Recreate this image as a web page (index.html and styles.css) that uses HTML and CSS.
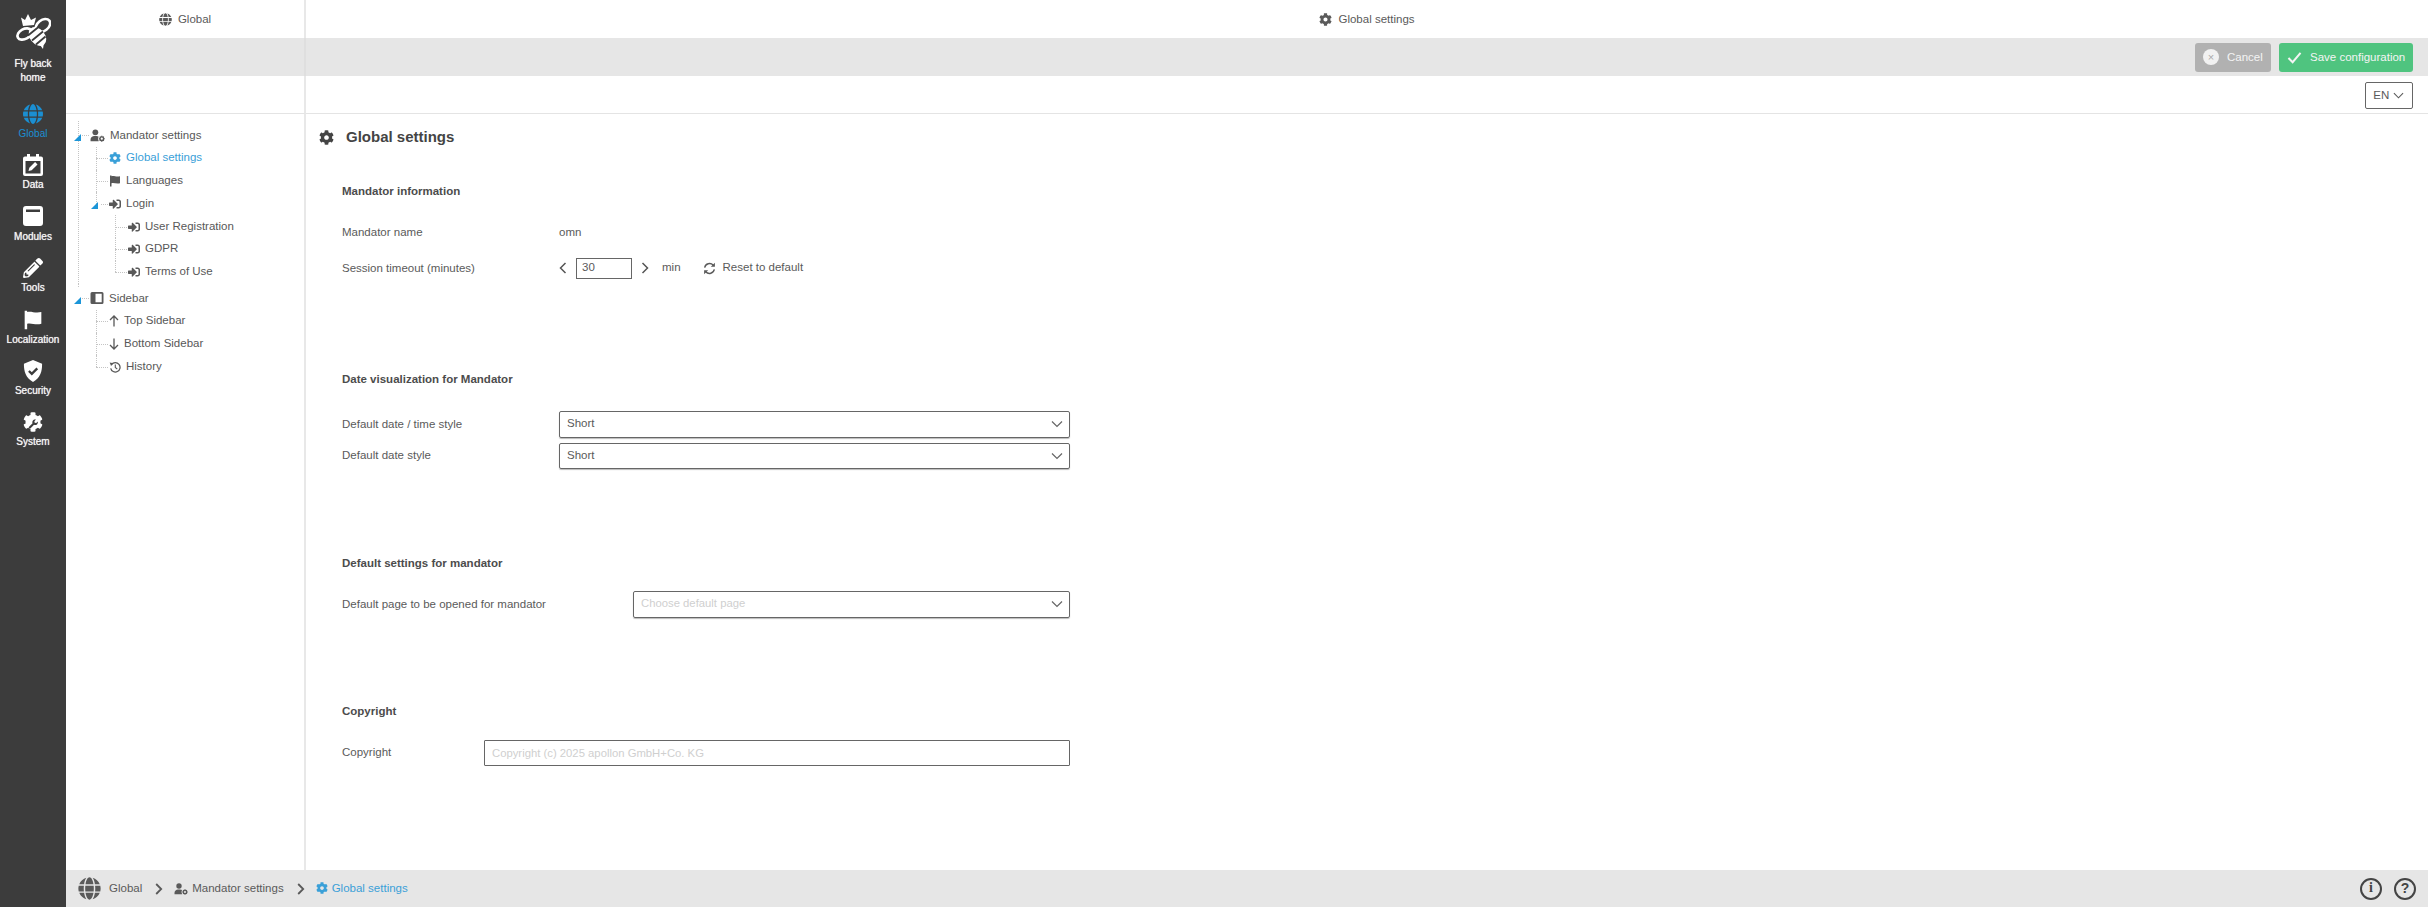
FILE: index.html
```html
<!DOCTYPE html>
<html lang="en">
<head>
<meta charset="utf-8">
<title>Global settings</title>
<link rel="stylesheet" href="styles.css">
</head>
<body>
<svg class="defs" aria-hidden="true">
  <symbol id="i-globe" viewBox="0 0 496 512"><path d="M336.5 160C322 70.7 287.8 8 248 8s-74 62.7-88.5 152h177zM152 256c0 22.2 1.2 43.5 3.3 64h185.3c2.1-20.5 3.3-41.8 3.3-64s-1.2-43.5-3.3-64H155.3c-2.1 20.5-3.3 41.8-3.3 64zm324.7-96c-28.6-67.9-86.5-120.4-158-141.6 24.4 33.8 41.2 84.7 50 141.6h108zM177.2 18.4C105.8 39.6 47.8 92.1 19.3 160h108c8.7-56.9 25.5-107.8 49.9-141.6zM487.4 192H372.7c2.1 21 3.3 42.5 3.3 64s-1.2 43-3.3 64h114.6c5.5-20.5 8.6-41.8 8.6-64s-3.1-43.5-8.5-64zM120 256c0-21.5 1.2-43 3.3-64H8.6C3.2 212.5 0 233.8 0 256s3.2 43.5 8.6 64h114.6c-2-21-3.2-42.5-3.2-64zm39.5 96c14.5 89.3 48.7 152 88.5 152s74-62.7 88.5-152h-177zm159.3 141.6c71.4-21.2 129.4-73.7 158-141.6h-108c-8.8 56.9-25.6 107.8-50 141.6zM19.3 352c28.6 67.9 86.5 120.4 158 141.6-24.4-33.8-41.2-84.7-50-141.6h-108z"/></symbol>
  <symbol id="i-cog" viewBox="0 0 512 512"><path d="M487.4 315.7l-42.6-24.6c4.3-23.2 4.3-47 0-70.2l42.6-24.6c4.9-2.8 7.1-8.6 5.5-14-11.1-35.6-30-67.8-54.7-94.6-3.8-4.1-10-5.1-14.8-2.3L380.8 110c-17.9-15.4-38.5-27.3-60.8-35.1V25.8c0-5.6-3.9-10.5-9.4-11.7-36.7-8.2-74.3-7.8-109.2 0-5.5 1.2-9.4 6.1-9.4 11.7V75c-22.2 7.9-42.8 19.8-60.8 35.1L88.7 85.5c-4.9-2.8-11-1.9-14.8 2.3-24.7 26.7-43.6 58.9-54.7 94.6-1.7 5.4.6 11.2 5.5 14L67.3 221c-4.3 23.2-4.3 47 0 70.2l-42.6 24.6c-4.9 2.8-7.1 8.6-5.5 14 11.1 35.6 30 67.8 54.7 94.6 3.8 4.1 10 5.1 14.8 2.3l42.6-24.6c17.9 15.4 38.5 27.3 60.8 35.1v49.2c0 5.6 3.9 10.5 9.4 11.7 36.7 8.2 74.3 7.8 109.2 0 5.5-1.2 9.4-6.1 9.4-11.7v-49.2c22.2-7.9 42.8-19.8 60.8-35.1l42.6 24.6c4.9 2.8 11 1.9 14.8-2.3 24.7-26.7 43.6-58.9 54.7-94.6 1.5-5.5-.7-11.3-5.6-14.1zM256 336c-44.1 0-80-35.9-80-80s35.9-80 80-80 80 35.9 80 80-35.9 80-80 80z"/></symbol>
  <symbol id="i-signin" viewBox="0 0 512 512"><path d="M416 448h-84c-6.6 0-12-5.4-12-12v-40c0-6.6 5.4-12 12-12h84c17.7 0 32-14.3 32-32V160c0-17.7-14.3-32-32-32h-84c-6.6 0-12-5.4-12-12V76c0-6.6 5.4-12 12-12h84c53 0 96 43 96 96v192c0 53-43 96-96 96zm-47-201L201 79c-15-15-41-4.5-41 17v96H24c-13.3 0-24 10.7-24 24v96c0 13.3 10.7 24 24 24h136v96c0 21.5 26 32 41 17l168-168c9.3-9.4 9.3-24.6 0-34z"/></symbol>
  <symbol id="i-usercog" viewBox="0 0 28 24"><circle cx="10" cy="6" r="5.4"/><path d="M1 22.5v-3C1 15.5 4.5 13 8 13h4c1.6 0 3 .4 4.2 1.2-1.4 2.2-1.4 5.4 0 7.6.2.3 0 .7-.2.7H1z"/><circle cx="22" cy="18" r="3.4" fill="none" stroke="currentColor" stroke-width="2.6"/><path d="M22 12.4v2M22 21.6v2M16.6 18h2M25.4 18h2M18.2 14.2l1.4 1.4M24.4 20.4l1.4 1.4M18.2 21.8l1.4-1.4M24.4 15.6l1.4-1.4" stroke="currentColor" stroke-width="2.2"/></symbol>
  <symbol id="i-flag" viewBox="0 0 24 24"><path d="M2 1h3v1.500c5-1.500 9 1.800 17 0v14c-7 2-12-1.500-17 0V23H2z"/></symbol>
  <symbol id="i-chev" viewBox="0 0 12 12"><path d="M1 3.500l5 5 5-5" fill="none" stroke="currentColor" stroke-width="1.200"/></symbol>
</svg>

<div class="app">
  <nav class="rail">
    <a class="rail-home">
      <svg class="bee" viewBox="0 0 36 36">
        <path class="bee-fill" d="M6 3.500l4 2.500 3-6 3 6 5-2.500-2 7.500-11 1z"/>
        <ellipse class="bee-line" cx="28" cy="11.500" rx="8" ry="5.500" transform="rotate(-38 28 11.500)"/>
        <ellipse class="bee-line" cx="9.500" cy="20" rx="7.500" ry="5" transform="rotate(-28 9.500 20)"/>
        <ellipse class="bee-fill" cx="22.500" cy="22.500" rx="7.500" ry="10.500" transform="rotate(-38 22.500 22.500)"/>
        <path class="bee-fill" d="M25 31l3 4 1-7z"/>
        <path class="bee-stripe" d="M13 21.500L23.500 13M17 26.500L28 17.500M21 30.500L30.500 22.500"/>
      </svg>
      <span class="rail-label rail-home-label">Fly back<br>home</span>
    </a>
    <a class="rail-item active"><svg class="rail-icon"><use href="#i-globe"/></svg><span class="rail-label">Global</span></a>
    <a class="rail-item">
      <svg class="rail-icon" viewBox="0 0 20 22"><path d="M4 0h3v2.500h6V0h3v2.500h2a2 2 0 0 1 2 2V20a2 2 0 0 1-2 2H2a2 2 0 0 1-2-2V4.500a2 2 0 0 1 2-2h2zM2.500 7v12.500h15V7z"/><path d="M5.500 17l.8-3.200 5.800-5.800 2.400 2.400-5.800 5.800z"/></svg>
      <span class="rail-label">Data</span>
    </a>
    <a class="rail-item">
      <svg class="rail-icon rail-wide" viewBox="0 0 20 20"><path fill-rule="evenodd" d="M3 0h14a3 3 0 0 1 3 3v14a3 3 0 0 1-3 3H3a3 3 0 0 1-3-3V3a3 3 0 0 1 3-3zM3 3.500V6h14V3.500z"/></svg>
      <span class="rail-label">Modules</span>
    </a>
    <a class="rail-item">
      <svg class="rail-icon" viewBox="0 0 512 512"><path d="M497.9 142.1l-46.1 46.1c-4.7 4.7-12.3 4.7-17 0l-111-111c-4.7-4.7-4.7-12.3 0-17l46.1-46.1c18.7-18.7 49.1-18.7 67.9 0l60.1 60.1c18.8 18.7 18.8 49.1 0 67.9zM284.2 99.8L21.6 362.4.4 483.9c-2.9 16.4 11.4 30.600 27.8 27.8l121.5-21.3 262.6-262.6c4.7-4.7 4.7-12.3 0-17l-111-111c-4.8-4.7-12.4-4.7-17.1 0zM124.1 339.9c-5.5-5.5-5.5-14.3 0-19.8l154-154c5.5-5.5 14.3-5.5 19.8 0s5.5 14.3 0 19.8l-154 154c-5.5 5.5-14.3 5.5-19.8 0zM88 424h48v36.3l-64.5 11.3-31.1-31.1L51.7 376H88v48z"/></svg>
      <span class="rail-label">Tools</span>
    </a>
    <a class="rail-item"><svg class="rail-icon"><use href="#i-flag"/></svg><span class="rail-label">Localization</span></a>
    <a class="rail-item">
      <svg class="rail-icon" viewBox="0 0 22 24"><path d="M11 0l10 4c0 9-2 15.500-10 20C3 19.500 1 13 1 4z"/><path class="rail-cut" d="M6.500 12l3.200 3.200 6-6" stroke-width="2.600"/></svg>
      <span class="rail-label">Security</span>
    </a>
    <a class="rail-item">
      <svg class="rail-icon" viewBox="0 0 512 512"><use href="#i-cog"/><circle class="rail-hub" cx="256" cy="256" r="120"/><path class="rail-wrench" d="M150 385l95-95c-22-48 18-112 88-98l-42 44 8 38 38 8 44-42c10 70-52 108-98 88l-95 95c-24 12-50-14-38-38z"/></svg>
      <span class="rail-label">System</span>
    </a>
  </nav>

  <div class="main">
    <div class="cell side head"><svg class="ic13"><use href="#i-globe"/></svg><span>Global</span></div>
    <div class="cell head"><svg class="ic13"><use href="#i-cog"/></svg><span>Global settings</span></div>

    <div class="cell side band"></div>
    <div class="cell band actions">
      <button class="btn btn-cancel" type="button"><span class="x-dot">×</span>Cancel</button>
      <button class="btn btn-save" type="button"><svg class="check" viewBox="0 0 16 14"><path d="M1.500 7.500l4.500 4.500 8.500-10" fill="none" stroke="currentColor" stroke-width="2.200"/></svg>Save configuration</button>
    </div>

    <div class="cell side lang-row"></div>
    <div class="cell lang-row lang-end">
      <div class="lang">EN<svg class="chev-lang"><use href="#i-chev"/></svg></div>
    </div>

    <aside class="cell side tree-pane">
      <ul class="tree">
        <li class="open">
          <div class="row"><span class="tri"></span><svg class="ic-user"><use href="#i-usercog"/></svg><span class="t">Mandator settings</span></div>
          <ul>
            <li><div class="row current"><svg class="ic12"><use href="#i-cog"/></svg><span class="t">Global settings</span></div></li>
            <li><div class="row"><svg class="ic11"><use href="#i-flag"/></svg><span class="t">Languages</span></div></li>
            <li class="open">
              <div class="row"><span class="tri"></span><svg class="ic12"><use href="#i-signin"/></svg><span class="t">Login</span></div>
              <ul>
                <li><div class="row"><svg class="ic12"><use href="#i-signin"/></svg><span class="t">User Registration</span></div></li>
                <li><div class="row"><svg class="ic12"><use href="#i-signin"/></svg><span class="t">GDPR</span></div></li>
                <li><div class="row"><svg class="ic12"><use href="#i-signin"/></svg><span class="t">Terms of Use</span></div></li>
              </ul>
            </li>
          </ul>
        </li>
        <li class="open tree-sidebar">
          <div class="row"><span class="tri"></span><svg class="ic-panel" viewBox="0 0 14 14"><path fill-rule="evenodd" d="M2 1h10a1.500 1.500 0 0 1 1.500 1.500v9A1.500 1.500 0 0 1 12 13H2A1.500 1.500 0 0 1 .5 11.500v-9A1.500 1.500 0 0 1 2 1zm3.500 1.800V11.200h6.200V2.800z"/></svg><span class="t">Sidebar</span></div>
          <ul>
            <li><div class="row"><svg class="ic-arrow" viewBox="0 0 10 12"><path d="M5 11.500V1M1 5l4-4 4 4" fill="none" stroke="currentColor" stroke-width="1.300"/></svg><span class="t">Top Sidebar</span></div></li>
            <li><div class="row"><svg class="ic-arrow" viewBox="0 0 10 12"><path d="M5 .5V11M1 7l4 4 4-4" fill="none" stroke="currentColor" stroke-width="1.300"/></svg><span class="t">Bottom Sidebar</span></div></li>
            <li><div class="row"><svg class="ic12" viewBox="0 0 14 14"><path d="M3 4a5.500 5.500 0 1 1-1 4.500" fill="none" stroke="currentColor" stroke-width="1.500"/><path d="M.8 1.800l4.400.8-2.800 3.200zM6.700 4h1.300v3.300l2 1.500-.7 1-2.600-2z"/></svg><span class="t">History</span></div></li>
          </ul>
        </li>
      </ul>
    </aside>

    <section class="cell content">
      <h1 class="title"><svg class="ic-title"><use href="#i-cog"/></svg>Global settings</h1>

      <h2 class="sec sec-first">Mandator information</h2>
      <div class="field col-a field-plain"><span>Mandator name</span><span>omn</span></div>
      <div class="field col-a field-spaced">
        <span>Session timeout (minutes)</span>
        <div class="spinner">
          <svg class="spin-arrow" viewBox="0 0 8 12"><path d="M6.500 1L1.500 6l5 5" fill="none" stroke="currentColor" stroke-width="1.500"/></svg>
          <input class="num" type="text" value="30">
          <svg class="spin-arrow" viewBox="0 0 8 12"><path d="M1.500 1l5 5-5 5" fill="none" stroke="currentColor" stroke-width="1.500"/></svg>
          <span class="unit">min</span>
          <svg class="ic-reset" viewBox="0 0 14 14"><path d="M1.800 6A5.300 5.300 0 0 1 11 3.500M12.200 8A5.300 5.300 0 0 1 3 10.500" fill="none" stroke="currentColor" stroke-width="1.500"/><path d="M12.800.8v4.400H8.400zM1.200 13.200V8.800h4.400z"/></svg>
          <span>Reset to default</span>
        </div>
      </div>

      <h2 class="sec sec-date">Date visualization for Mandator</h2>
      <div class="field col-a field-ctl"><span>Default date / time style</span><div class="select"><span>Short</span><svg class="chev"><use href="#i-chev"/></svg></div></div>
      <div class="field col-a field-ctl field-gap"><span>Default date style</span><div class="select"><span>Short</span><svg class="chev"><use href="#i-chev"/></svg></div></div>

      <h2 class="sec sec-next">Default settings for mandator</h2>
      <div class="field col-b field-ctl"><span>Default page to be opened for mandator</span><div class="select"><span class="ph">Choose default page</span><svg class="chev"><use href="#i-chev"/></svg></div></div>

      <h2 class="sec sec-next">Copyright</h2>
      <div class="field col-c field-ctl"><span>Copyright</span><input class="text" type="text" placeholder="Copyright (c) 2025 apollon GmbH+Co. KG"></div>
    </section>

    <footer class="crumbs">
      <svg class="ic-crumb-globe"><use href="#i-globe"/></svg>
      <span>Global</span>
      <svg class="crumb-sep" viewBox="0 0 8 12"><path d="M1.200 1l5 5-5 5" fill="none" stroke="currentColor" stroke-width="1.800"/></svg>
      <svg class="ic-user"><use href="#i-usercog"/></svg>
      <span>Mandator settings</span>
      <svg class="crumb-sep" viewBox="0 0 8 12"><path d="M1.200 1l5 5-5 5" fill="none" stroke="currentColor" stroke-width="1.800"/></svg>
      <span class="crumb-current"><svg class="ic12"><use href="#i-cog"/></svg>Global settings</span>
      <span class="help"><span class="round round-i">i</span><span class="round">?</span></span>
    </footer>
  </div>
</div>
</body>
</html>
```
FILE: styles.css
```css
* { box-sizing: border-box; }
html, body { margin: 0; height: 100%; overflow: hidden; background: #fff; }
body { font: 11.5px/1.2 "Liberation Sans", Arial, sans-serif; color: #5a5a5a; }
.defs { position: absolute; width: 0; height: 0; }
svg { fill: currentColor; flex: none; display: block; }
ul { list-style: none; margin: 0; padding: 0; }

.app { display: flex; height: 907px; }

/* rail */
.rail { width: 66px; background: #3c3c3c; color: #fff; display: flex; flex-direction: column; align-items: center; padding-top: 14px; flex: none; }
.rail-home { display: flex; flex-direction: column; align-items: center; height: 89px; }
.bee { width: 36px; height: 36px; }
.bee-fill { fill: #fff; }
.bee-line { fill: none; stroke: #fff; stroke-width: 2.6; }
.bee-stripe { fill: none; stroke: #3c3c3c; stroke-width: 1.8; }
.rail-home-label { margin-top: 7px; line-height: 14px; text-align: center; }
.rail-label { font-size: 10px; line-height: 13px; color: #f2f2f2; text-shadow: 0 0 .7px #f2f2f2; white-space: nowrap; }
.rail-home .rail-home-label { line-height: 14px; }
.rail-item { display: flex; flex-direction: column; align-items: center; height: 51.4px; gap: 2px; }
.rail-icon { width: 20px; height: 22px; }
.rail-wide { width: 20px; height: 20px; margin-bottom: 2px; }
.rail-cut { stroke: #3c3c3c; fill: none; }
.rail-hub { fill: #fff; }
.rail-wrench { fill: #3c3c3c; }
.active, .active .rail-label { color: #1b8fd2; text-shadow: none; }

/* main grid */
.main { flex: 1; min-width: 0; display: grid; grid-template-columns: 240px 1fr; grid-template-rows: 38px 38px 38px 1fr 37px; }
.cell { min-width: 0; }
.side { border-right: 2px solid #e8e8e8; }
.head { display: flex; align-items: center; justify-content: center; gap: 6px; padding-top: 1px; }
.band { background: #e6e6e6; }
.side.band { border-right-color: #dfdfdf; }
.actions { display: flex; align-items: center; justify-content: flex-end; gap: 8px; padding-right: 15px; }
.lang-row { border-bottom: 1px solid #e4e4e4; }
.lang-end { display: flex; justify-content: flex-end; padding: 6px 15px 0 0; }

.ic13 { width: 13px; height: 13px; }
.ic12 { width: 12px; height: 12px; }
.ic11 { width: 12px; height: 12px; }
.ic-user { width: 15px; height: 13px; }
.ic-panel { width: 14px; height: 14px; }
.ic-arrow { width: 10px; height: 12px; }
.ic-title { width: 15px; height: 15px; margin-right: 12px; color: #444; }

.btn { height: 29px; border: 0; border-radius: 3px; color: #f4f4f4; font: 11.5px "Liberation Sans", Arial, sans-serif; display: flex; align-items: center; padding: 0 8px; white-space: nowrap; }
.btn-cancel { background: #b1b1b1; width: 76px; gap: 8px; }
.x-dot { width: 16px; height: 16px; border-radius: 50%; background: #f1f1f1; color: #aaa; display: flex; align-items: center; justify-content: center; font-size: 11px; }
.btn-save { background: #4fc47f; width: 134px; gap: 8px; }
.check { width: 15px; height: 13px; }
.lang { width: 48.5px; height: 27px; border: 1px solid #666; border-radius: 2px; display: flex; align-items: center; justify-content: center; gap: 4px; }
.chev-lang { width: 11px; height: 11px; }

/* tree */
.tree-pane { padding: 10px 0 0 8px; }
.tree ul { padding-left: 19px; }
.tree li { position: relative; }
.row { display: flex; align-items: center; height: 22.8px; gap: 5px; white-space: nowrap; position: relative; color: #585858; padding-left: 16px; }
.tree > li > .row { padding-left: 16px; }
.tri { position: absolute; left: -2px; top: 9.500px; width: 0; height: 0; border-style: solid; border-width: 0 0 7px 7px; border-color: transparent transparent #1b95d8 transparent; }
.tree > li > .row .tri { left: 0; }
.tree li > ul li::before { content: ""; position: absolute; left: 2.500px; top: 0; bottom: 0; border-left: 1px dotted #c4c4c4; }
.tree li > ul li:last-child::before { bottom: auto; height: 11.400px; }
.tree li > ul li > .row::before { content: ""; position: absolute; left: 3px; top: 11.400px; width: 12px; border-top: 1px dotted #c4c4c4; }
.tree li > ul li > .row:has(.tri)::before { width: 0; }
.tree > li::before { content: ""; position: absolute; left: 3.500px; top: -3px; bottom: 0; border-left: 1px dotted #c4c4c4; }
.tree > li:last-child::before { bottom: auto; height: 3px; }
.tree > li > .row::after, .row:has(.tri)::after { content: ""; position: absolute; left: 8px; top: 11.400px; width: 7px; border-top: 1px dotted #c4c4c4; }
.tree-sidebar { margin-top: 3.500px; }
.current { color: #3aa0d8; }
.t { display: block; }

/* content */
.content { padding: 11px 0 0 13px; overflow: hidden; }
.title { margin: 0; display: flex; align-items: center; height: 24px; font-size: 15px; font-weight: 700; color: #444; }
.sec { margin: 0 0 0 23px; height: 16px; line-height: 16px; font-size: 11.500px; font-weight: 700; color: #4c4c4c; }
.sec-first { margin-top: 34px; margin-bottom: 22px; }
.sec-date { margin-top: 92px; margin-bottom: 24px; }
.sec-next { margin-top: 85.500px; margin-bottom: 20.500px; }
.field { margin-left: 23px; width: 728px; display: grid; align-items: center; }
.field > span { padding-top: 1px; }
.col-a { grid-template-columns: 217px 1fr; }
.col-b { grid-template-columns: 291px 1fr; }
.col-c { grid-template-columns: 142px 1fr; }
.field-plain { height: 22px; }
.field-spaced { height: 22px; margin-top: 14px; }
.field-ctl { height: 26.500px; }
.field-gap { margin-top: 5px; }
.spinner { display: flex; align-items: center; }
.spin-arrow { width: 8px; height: 12px; color: #555; }
.num { width: 56px; height: 21px; margin: 0 9px 0 9px; padding: 0 0 2px 5px; border: 1px solid #666; font: 11.5px "Liberation Sans", Arial, sans-serif; color: #5a5a5a; outline: 0; }
.unit { margin: 0 22px 0 13px; }
.ic-reset { width: 13px; height: 13px; margin-right: 7px; }
.select { height: 100%; border: 1px solid #666; border-radius: 2px; box-shadow: 0 1px 1px #bbb; display: flex; align-items: center; justify-content: space-between; padding: 0 6px 0 7px; }
.chev { width: 12px; height: 12px; color: #666; }
.ph { color: #cfcfcf; font-size: 11.3px; }
.text { height: 100%; width: 100%; border: 1px solid #666; border-radius: 1px; padding: 0 7px; font: 11.3px "Liberation Sans", Arial, sans-serif; outline: 0; }
.text::placeholder { color: #cfcfcf; opacity: 1; }

/* footer */
.crumbs { grid-column: 1 / -1; background: #e6e6e6; display: flex; align-items: center; padding-left: 12px; }
.ic-crumb-globe { width: 23px; height: 23px; margin-right: 8px; }
.crumb-sep { width: 8px; height: 12px; margin: 0 11px 0 13px; }
.crumbs .ic-user { width: 14px; height: 12px; margin-right: 4px; }
.crumb-current { color: #3aa0d8; display: flex; align-items: center; gap: 4px; }
.help { margin-left: auto; display: flex; gap: 12px; padding-right: 12px; }
.round { width: 22px; height: 22px; border: 2px solid #444; border-radius: 50%; display: flex; align-items: center; justify-content: center; font-size: 14px; font-weight: 700; color: #444; }
.round-i { font-family: "Liberation Serif", serif; }
```
